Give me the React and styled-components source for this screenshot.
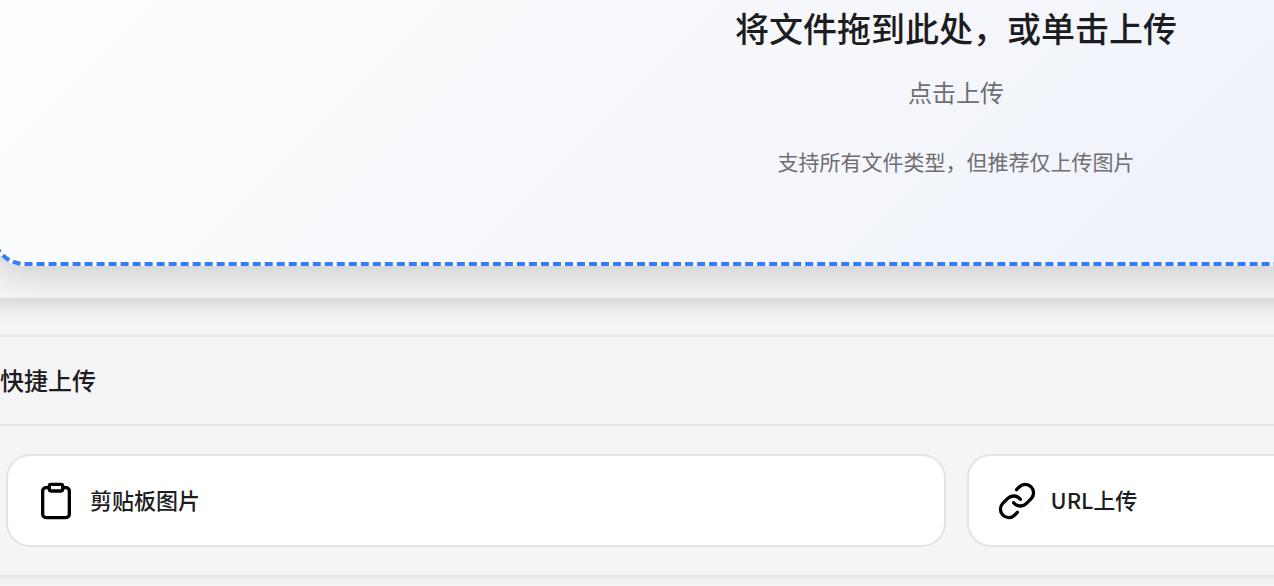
import React from 'react';
import styled, { createGlobalStyle } from 'styled-components';
import { Clipboard, Link } from 'lucide-react';

const GlobalStyle = createGlobalStyle`
  * {
    box-sizing: border-box;
  }

  body {
    margin: 0;
    background-color: #f5f5f7;
    color: #1d1d1f;
    font-family: "Noto Sans CJK SC", sans-serif;
  }

  button {
    font-family: inherit;
  }
`;

const Viewport = styled.div`
  overflow: hidden;
`;

const Page = styled.main`
  margin: 0 -646px 0 -8px;
  padding-bottom: 32px;
`;

const PanelShadow = styled.div`
  margin: 0 -32px 37px;
  box-shadow: 0 4px 20px rgba(0, 0, 0, 0.18);
`;

const UploadPanel = styled.section`
  padding: 0 32px 32px;
  overflow: hidden;
  background-color: #f4f4f6;
`;

const DropZone = styled.button`
  display: flex;
  flex-direction: column;
  align-items: center;
  width: 100%;
  margin-top: -200px;
  padding: 204px 32px 86px;
  border: 4px dashed #357cfb;
  border-radius: 32px;
  background: linear-gradient(135deg, #ffffff 0%, #f5f7fb 48%, #eef2fb 70%, #edf2f7 100%);
  box-shadow: 0 8px 32px rgba(0, 0, 0, 0.16);
  color: #1d1d1f;
  cursor: pointer;
`;

const DropTitle = styled.span`
  font-size: 34px;
  font-weight: 500;
  line-height: 40px;
`;

const DropText = styled.span`
  margin-top: 28px;
  color: #6e6e73;
  font-size: 24px;
  line-height: 32px;
`;

const DropTip = styled.span`
  margin-top: 38px;
  color: #6e6e73;
  font-size: 21px;
  line-height: 30px;
`;

const QuickPanel = styled.section`
  margin: 0 -32px;
  border-top: 2px solid #e6e6e8;
  border-bottom: 2px solid #e4e4e6;
  box-shadow: 0 2px 8px rgba(0, 0, 0, 0.06);
`;

const QuickHeader = styled.header`
  padding: 27px 40px 28px;
  border-bottom: 2px solid #e6e6e8;
`;

const QuickTitle = styled.h2`
  margin: 0;
  font-size: 24px;
  font-weight: 500;
  line-height: 32px;
`;

const QuickList = styled.div`
  display: grid;
  grid-template-columns: 1fr 1fr;
  gap: 21px;
  padding: 28px 46px;
`;

const QuickButton = styled.button`
  display: flex;
  align-items: center;
  gap: 14px;
  height: 93px;
  padding: 0 28px;
  border: 2px solid #e4e4e6;
  border-radius: 24px;
  background-color: #ffffff;
  color: #1d1d1f;
  cursor: pointer;

  svg {
    color: #000000;
  }
`;

const QuickLabel = styled.span`
  padding-bottom: 4px;
  font-size: 22px;
  font-weight: 500;
  line-height: 32px;
`;

const App = () => (
  <>
    <GlobalStyle />
    <Viewport>
      <Page>
        <PanelShadow>
          <UploadPanel>
            <DropZone type="button">
              <DropTitle>将文件拖到此处，或单击上传</DropTitle>
              <DropText>点击上传</DropText>
              <DropTip>支持所有文件类型，但推荐仅上传图片</DropTip>
            </DropZone>
          </UploadPanel>
        </PanelShadow>
        <QuickPanel>
          <QuickHeader>
            <QuickTitle>快捷上传</QuickTitle>
          </QuickHeader>
          <QuickList>
            <QuickButton type="button">
              <Clipboard size={40} />
              <QuickLabel>剪贴板图片</QuickLabel>
            </QuickButton>
            <QuickButton type="button">
              <Link size={40} />
              <QuickLabel>URL上传</QuickLabel>
            </QuickButton>
          </QuickList>
        </QuickPanel>
      </Page>
    </Viewport>
  </>
);

export default App;
